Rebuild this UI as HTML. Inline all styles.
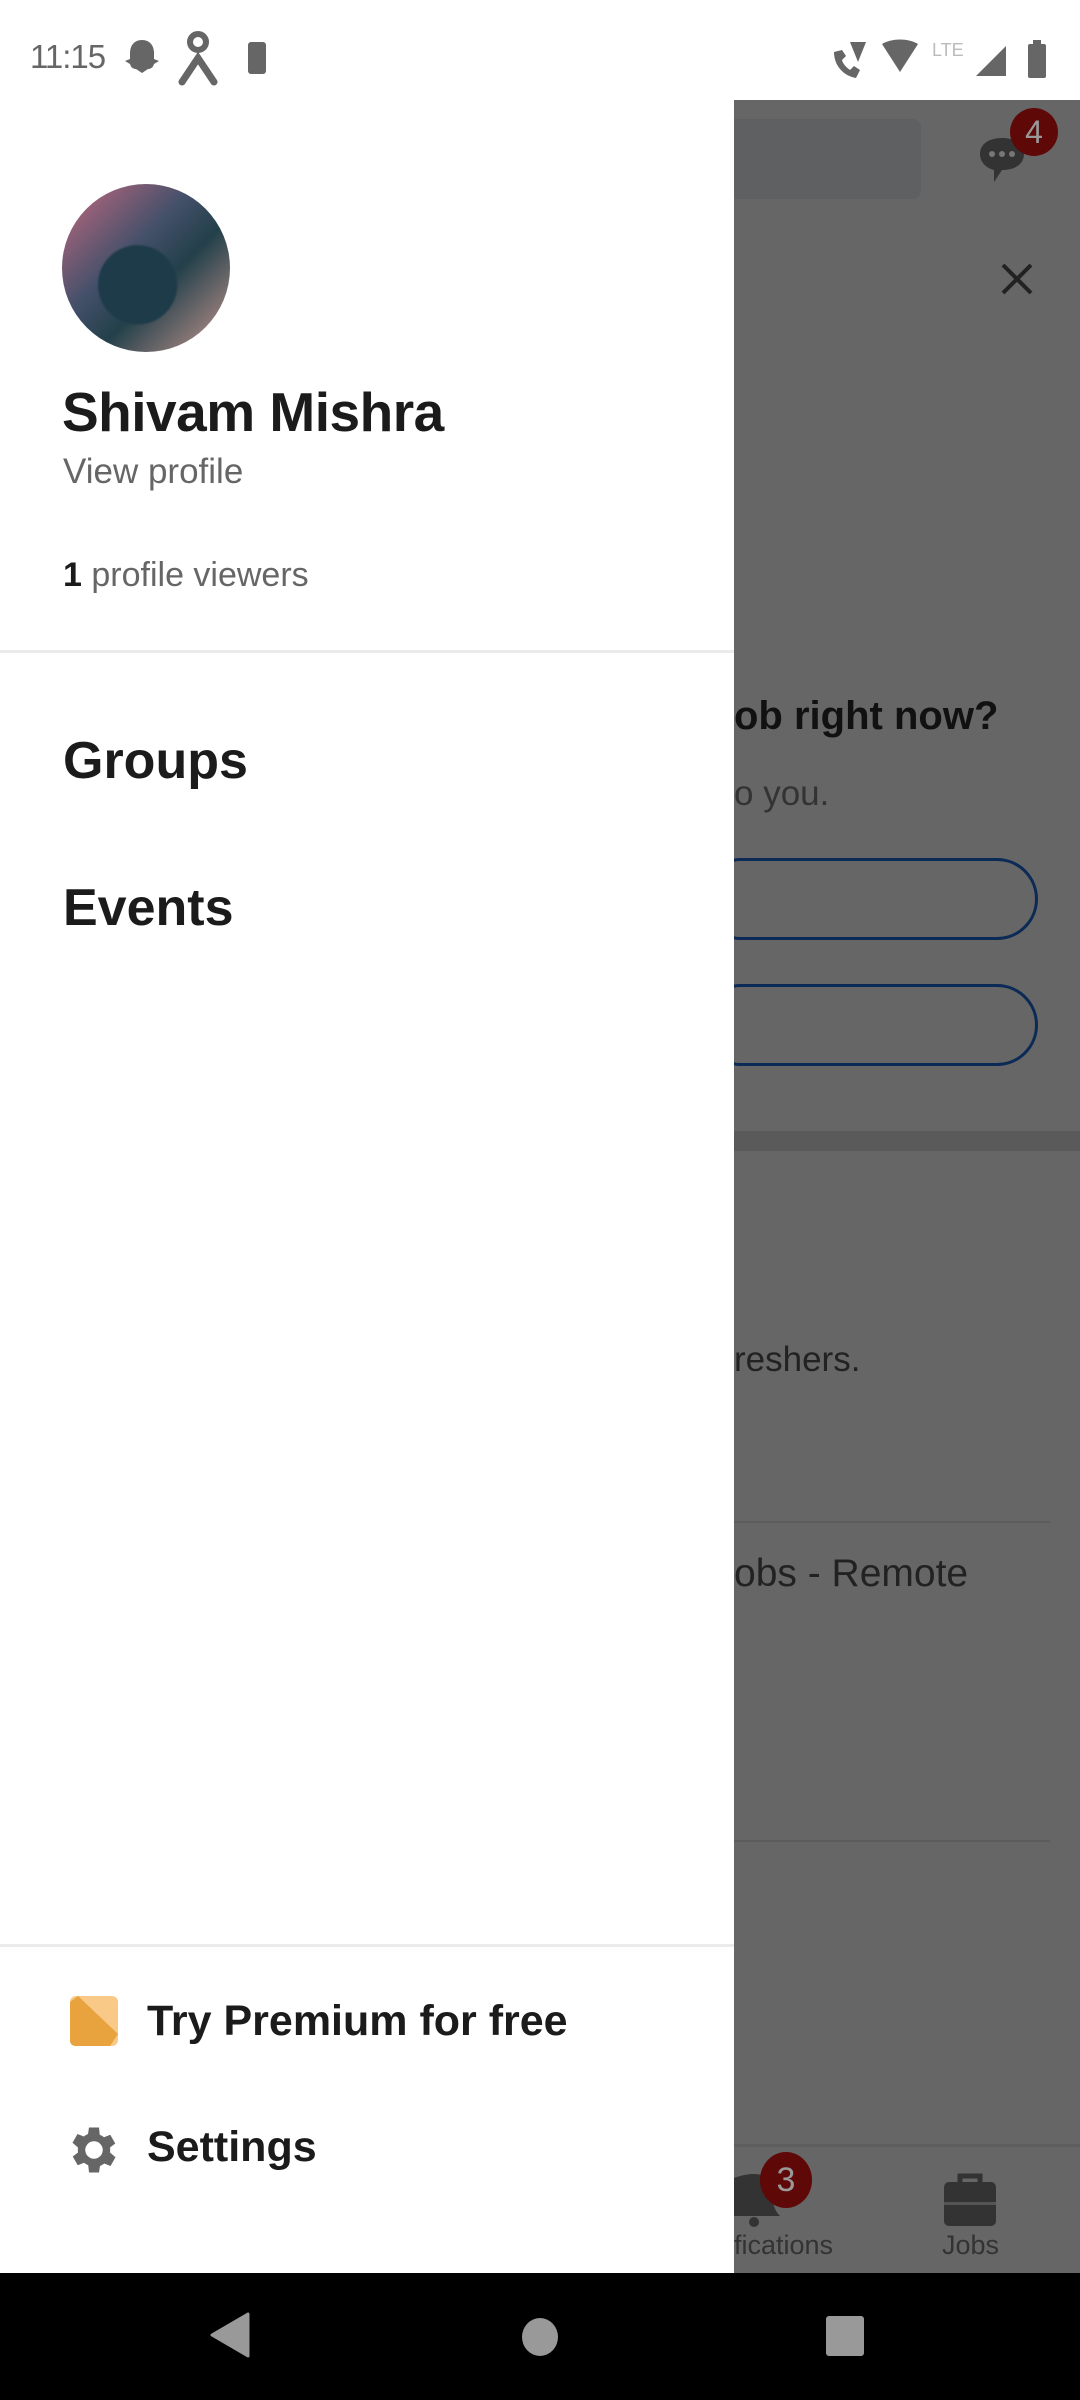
<!DOCTYPE html>
<html><head><meta charset="utf-8"><style>
*{margin:0;padding:0;box-sizing:border-box}
body{width:1080px;height:2400px;position:relative;overflow:hidden;background:#fff;font-family:"Liberation Sans",sans-serif}
.a{position:absolute;white-space:nowrap}
</style></head><body>
<!-- status bar -->
<div class="a" style="left:0;top:0;width:1080px;height:100px;background:#fff"></div>
<div class="a" style="left:30px;top:38px;font-size:33px;color:#666;letter-spacing:-1px">11:15</div>
<svg class="a" style="left:122px;top:38px" width="40" height="42" viewBox="0 0 40 42"><path d="M20 2c8 0 12 6 12 13v6l5 2-5 3c-1 4-4 5-6 5l-6 4-6-4c-2 0-5-1-6-5l-5-3 5-2v-6C8 8 12 2 20 2z" fill="#666"/></svg>
<svg class="a" style="left:176px;top:30px" width="44" height="56" viewBox="0 0 44 56"><circle cx="22" cy="12" r="8" fill="none" stroke="#666" stroke-width="6"/><path d="M6 52L22 28 38 52" fill="none" stroke="#666" stroke-width="7" stroke-linecap="round"/></svg>
<div class="a" style="left:248px;top:42px;width:18px;height:32px;background:#666;border-radius:3px"></div>
<svg class="a" style="left:830px;top:36px" width="220" height="44" viewBox="0 0 220 44"><path d="M4 16c0 14 10 24 22 26l4-8-6-4-4 4c-4-3-7-6-8-10l4-4-4-6z" fill="#666"/><path d="M20 6l16 0-8 20z" fill="#666"/><path d="M52 8c10-6 26-6 36 0L70 36z" fill="#666"/><text x="102" y="20" font-size="18" fill="#bbb" font-family="Liberation Sans">LTE</text><path d="M146 40L176 10V40z" fill="#666"/><rect x="198" y="8" width="18" height="34" rx="2" fill="#666"/><rect x="203" y="4" width="8" height="5" fill="#666"/></svg>

<!-- right dimmed content -->
<div class="a" style="left:734px;top:100px;width:346px;height:2173px;background:#666"></div>
<div class="a" style="left:734px;top:119px;width:187px;height:80px;background:#5f6062;border-radius:0 8px 8px 0"></div>
<svg class="a" style="left:972px;top:130px" width="60" height="60" viewBox="0 0 60 60"><path d="M8 24c0-10 9-16 22-16s22 6 22 16-9 16-22 16l-8 12v-12C14 38 8 32 8 24z" fill="#333"/><circle cx="20" cy="24" r="3" fill="#777"/><circle cx="30" cy="24" r="3" fill="#777"/><circle cx="40" cy="24" r="3" fill="#777"/></svg>
<div class="a" style="left:1010px;top:108px;width:48px;height:48px;border-radius:50%;background:#5e0808;color:#999;font-size:32px;text-align:center;line-height:48px">4</div>
<svg class="a" style="left:1000px;top:262px" width="34" height="34" viewBox="0 0 34 34"><path d="M3 3L31 31M31 3L3 31" stroke="#222" stroke-width="4"/></svg>
<div class="a" style="left:734px;top:694px;font-size:40px;font-weight:bold;color:#111">ob right now?</div>
<div class="a" style="left:734px;top:774px;font-size:35px;color:#333">o you.</div>
<div class="a" style="left:700px;top:858px;width:338px;height:82px;border:3px solid #0c2a56;border-radius:41px"></div>
<div class="a" style="left:700px;top:984px;width:338px;height:82px;border:3px solid #0c2a56;border-radius:41px"></div>
<div class="a" style="left:734px;top:1131px;width:346px;height:20px;background:#5a5a5a"></div>
<div class="a" style="left:734px;top:1340px;font-size:35px;color:#222">reshers.</div>
<div class="a" style="left:734px;top:1521px;width:316px;height:2px;background:#5c5c5c"></div>
<div class="a" style="left:734px;top:1552px;font-size:39px;color:#222">obs - Remote</div>
<div class="a" style="left:734px;top:1840px;width:316px;height:2px;background:#5c5c5c"></div>
<div class="a" style="left:734px;top:2144px;width:346px;height:3px;background:#5e5e5e"></div>
<svg class="a" style="left:734px;top:2170px" width="50" height="60" viewBox="0 0 50 60"><path d="M0 46h46c-6-6-8-14-8-26C38 8 30 4 20 4S0 8 0 8z" fill="#333"/><circle cx="20" cy="52" r="5" fill="#333"/></svg>
<div class="a" style="left:760px;top:2152px;width:52px;height:56px;border-radius:50%;background:#5e0808;color:#999;font-size:34px;text-align:center;line-height:56px">3</div>
<div class="a" style="left:734px;top:2230px;font-size:27px;color:#333">fications</div>
<svg class="a" style="left:942px;top:2170px" width="56" height="58" viewBox="0 0 56 58"><path d="M18 12V6h20v6" fill="none" stroke="#333" stroke-width="5"/><rect x="2" y="12" width="52" height="44" rx="5" fill="#333"/><rect x="2" y="32" width="52" height="3" fill="#555"/></svg>
<div class="a" style="left:942px;top:2230px;font-size:27px;color:#333">Jobs</div>

<!-- drawer -->
<div class="a" style="left:0;top:100px;width:734px;height:2173px;background:#fff"></div>
<div class="a" style="left:62px;top:184px;width:168px;height:168px;border-radius:50%;background:radial-gradient(circle at 45% 60%,#1e3b4a 0 28%,transparent 30%),linear-gradient(135deg,#c46a80,#44506a 40%,#23404a 60%,#c89890);"></div>
<div class="a" style="left:62px;top:380px;font-size:55px;font-weight:bold;color:#1b1b1b;letter-spacing:-0.5px">Shivam Mishra</div>
<div class="a" style="left:63px;top:452px;font-size:35px;color:#666">View profile</div>
<div class="a" style="left:63px;top:556px;font-size:34px;color:#666"><b style="color:#1b1b1b">1</b> profile viewers</div>
<div class="a" style="left:0;top:650px;width:734px;height:3px;background:#ebebeb"></div>
<div class="a" style="left:63px;top:731px;font-size:52px;font-weight:bold;color:#1b1b1b">Groups</div>
<div class="a" style="left:63px;top:878px;font-size:52px;font-weight:bold;color:#1b1b1b">Events</div>
<div class="a" style="left:0;top:1944px;width:734px;height:3px;background:#ebebeb"></div>
<svg class="a" style="left:70px;top:1996px" width="48" height="50" viewBox="0 0 48 50"><rect width="48" height="50" rx="6" fill="#f8c987"/><path d="M0 6L8 0 48 38 40 50H6Q0 50 0 44z" fill="#e8a33e"/></svg>
<div class="a" style="left:147px;top:1997px;font-size:43px;font-weight:bold;color:#1b1b1b">Try Premium for free</div>
<svg class="a" style="left:64px;top:2120px" width="60" height="60" viewBox="0 0 24 24"><path fill="#666" d="M19.4 13a7.5 7.5 0 000-2l2.1-1.6-2-3.5-2.5 1a7 7 0 00-1.7-1L15 3h-4l-.4 2.6a7 7 0 00-1.7 1l-2.5-1-2 3.5L6.6 11a7.5 7.5 0 000 2l-2.1 1.6 2 3.5 2.5-1a7 7 0 001.7 1L11 21h4l.4-2.6a7 7 0 001.7-1l2.5 1 2-3.5zM13 15.5a3.5 3.5 0 110-7 3.5 3.5 0 010 7z" transform="translate(-1 0)"/></svg>
<div class="a" style="left:147px;top:2123px;font-size:43px;font-weight:bold;color:#1b1b1b">Settings</div>

<!-- nav bar -->
<div class="a" style="left:0;top:2273px;width:1080px;height:127px;background:#000"></div>
<svg class="a" style="left:210px;top:2312px" width="40" height="46" viewBox="0 0 40 46"><path d="M38 2V44L2 23z" fill="#999" stroke="#999" stroke-width="3" stroke-linejoin="round"/></svg>
<div class="a" style="left:522px;top:2318px;width:36px;height:38px;border-radius:50%;background:#999"></div>
<div class="a" style="left:826px;top:2316px;width:38px;height:40px;border-radius:3px;background:#999"></div>
</body></html>
